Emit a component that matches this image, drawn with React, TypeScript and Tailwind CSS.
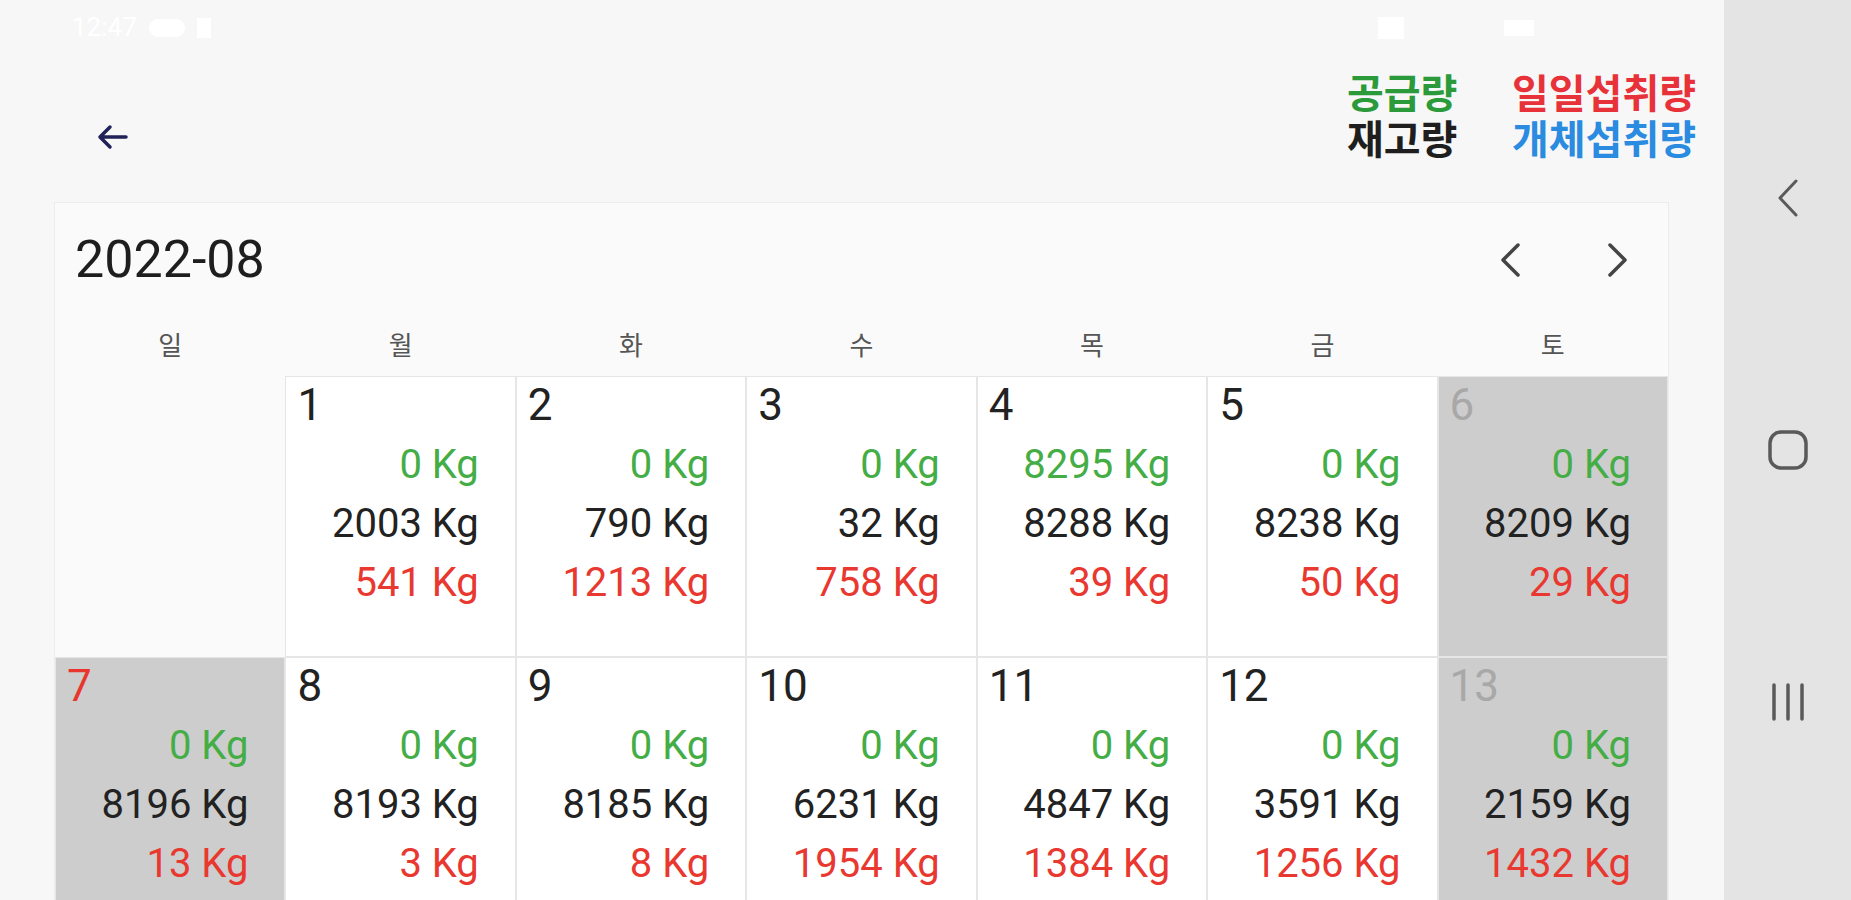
import React from "react";

interface DayCell {
  day: number;
  supply: number;
  stock: number;
  intake: number;
  kind: "weekday" | "sun" | "sat";
}

const rows: (DayCell | null)[][] = [
  [
    null,
    { day: 1, supply: 0, stock: 2003, intake: 541, kind: "weekday" },
    { day: 2, supply: 0, stock: 790, intake: 1213, kind: "weekday" },
    { day: 3, supply: 0, stock: 32, intake: 758, kind: "weekday" },
    { day: 4, supply: 8295, stock: 8288, intake: 39, kind: "weekday" },
    { day: 5, supply: 0, stock: 8238, intake: 50, kind: "weekday" },
    { day: 6, supply: 0, stock: 8209, intake: 29, kind: "sat" },
  ],
  [
    { day: 7, supply: 0, stock: 8196, intake: 13, kind: "sun" },
    { day: 8, supply: 0, stock: 8193, intake: 3, kind: "weekday" },
    { day: 9, supply: 0, stock: 8185, intake: 8, kind: "weekday" },
    { day: 10, supply: 0, stock: 6231, intake: 1954, kind: "weekday" },
    { day: 11, supply: 0, stock: 4847, intake: 1384, kind: "weekday" },
    { day: 12, supply: 0, stock: 3591, intake: 1256, kind: "weekday" },
    { day: 13, supply: 0, stock: 2159, intake: 1432, kind: "sat" },
  ],
];

const weekdays = ["일", "월", "화", "수", "목", "금", "토"];

function Cell({ cell }: { cell: DayCell | null }) {
  if (!cell) return <div className="h-[281px]" />;

  const bg = cell.kind === "weekday" ? "bg-white" : "bg-[#cdcdcd]";
  const numColor =
    cell.kind === "sun" ? "text-[#e8352e]" : cell.kind === "sat" ? "text-[#a8a8a8]" : "text-[#222]";

  return (
    <div className={`h-[281px] border border-[#e6e6e6] ${bg}`}>
      <div className={`pl-[11px] pt-[3px] text-[44px] leading-[50px] ${numColor}`}>{cell.day}</div>
      <div className="mt-[5px] pr-[36px] text-right text-[40px] leading-[59px]">
        <div className="text-[#45ad45]">{cell.supply} Kg</div>
        <div className="text-[#222]">{cell.stock} Kg</div>
        <div className="text-[#e8382f]">{cell.intake} Kg</div>
      </div>
    </div>
  );
}

export default function App() {
  return (
    <div className="flex h-[900px] w-[1851px] overflow-hidden bg-[#f7f7f7] font-['Roboto','Noto_Sans_CJK_KR',sans-serif]">
      {/* screen */}
      <div className="flex w-[1724px] flex-col">
        {/* status bar (white on light, barely visible) */}
        <div className="flex h-[55px] shrink-0 items-center justify-between pl-[72px] pr-[190px] text-[26px] text-white">
          <div className="flex items-center gap-3">
            <span>12:47</span>
            <span className="h-[18px] w-[36px] rounded-full bg-white" />
            <span className="h-[20px] w-[14px] bg-white" />
          </div>
          <div className="flex items-center gap-[100px]">
            <span className="h-[22px] w-[26px] bg-white" />
            <span className="h-[16px] w-[30px] bg-white" />
          </div>
        </div>

        {/* header */}
        <div className="flex h-[147px] shrink-0 items-start justify-between pl-[97px] pr-[28px] pt-[13px]">
          <div className="mt-[46px] flex h-[46px] items-center">
            <svg width="32" height="28" viewBox="0 0 32 28" fill="none">
              <path
                d="M29 14H4M13 4L3 14l10 10"
                stroke="#22225a"
                strokeWidth="3.5"
                strokeLinecap="round"
                strokeLinejoin="round"
              />
            </svg>
          </div>
          <div className="grid grid-cols-[165px_auto] font-['Noto_Sans_CJK_KR',sans-serif] text-[40px] font-bold leading-[46px]">
            <span className="text-[#2a9a3a]">공급량</span>
            <span className="text-[#e8323a]">일일섭취량</span>
            <span className="text-[#1e1e1e]">재고량</span>
            <span className="text-[#2a8be0]">개체섭취량</span>
          </div>
        </div>

        {/* calendar */}
        <div className="ml-[54px] mr-[55px] flex-1 border border-b-0 border-[#ececec] bg-[#fafafa]">
          <div className="flex h-[113px] items-center justify-between pl-[20px] pr-[39px]">
            <span className="text-[52px] text-[#1e1e1e]">2022-08</span>
            <div className="flex items-center gap-[86px]">
              <svg width="22" height="36" viewBox="0 0 22 36" fill="none">
                <path d="M19 3L4 18l15 15" stroke="#444" strokeWidth="3.5" strokeLinecap="round" strokeLinejoin="round" />
              </svg>
              <svg width="22" height="36" viewBox="0 0 22 36" fill="none">
                <path d="M3 3l15 15L3 33" stroke="#444" strokeWidth="3.5" strokeLinecap="round" strokeLinejoin="round" />
              </svg>
            </div>
          </div>

          <div className="grid h-[60px] grid-cols-7 items-center text-center text-[26px] text-[#555]">
            {weekdays.map((w) => (
              <span key={w}>{w}</span>
            ))}
          </div>

          {rows.map((row, i) => (
            <div key={i} className="grid grid-cols-7">
              {row.map((cell, j) => (
                <Cell key={j} cell={cell} />
              ))}
            </div>
          ))}
        </div>
      </div>

      {/* navigation bar */}
      <div className="flex w-[127px] flex-col items-center gap-[212px] bg-[#e4e4e4] pt-[178px]">
        <svg width="40" height="40" viewBox="0 0 40 40" fill="none">
          <path d="M28 3L12 20l16 17" stroke="#5a5a5a" strokeWidth="3" strokeLinecap="round" strokeLinejoin="round" />
        </svg>
        <svg width="40" height="40" viewBox="0 0 40 40" fill="none">
          <rect x="2" y="2" width="36" height="36" rx="11" stroke="#5a5a5a" strokeWidth="3.5" />
        </svg>
        <svg width="40" height="40" viewBox="0 0 40 40" fill="none">
          <path d="M6 3v34M20 3v34M34 3v34" stroke="#5a5a5a" strokeWidth="3.5" strokeLinecap="round" />
        </svg>
      </div>
    </div>
  );
}
